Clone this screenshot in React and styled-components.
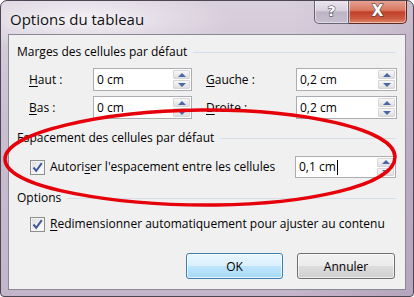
import styled, { createGlobalStyle } from "styled-components";

const GlobalStyle = createGlobalStyle`
  html, body {
    margin: 0;
    padding: 0;
    background: #ffffff;
  }
  body {
    font-family: "Open Sans", "Noto Sans", sans-serif;
    font-size: 12px;
    color: #000;
  }
`;

const Window = styled.div`
  position: relative;
  width: 414px;
  height: 297px;
  box-sizing: border-box;
  border: 1px solid #4b4652;
  border-radius: 7px 7px 4px 4px;
  padding: 0 7px 6px;
  display: flex;
  flex-direction: column;
  overflow: hidden;
  background:
    radial-gradient(ellipse 150px 34px at 80px 18px, rgba(255, 255, 255, 0.7), rgba(255, 255, 255, 0)),
    linear-gradient(90deg, rgba(255, 255, 255, 0) 70%, rgba(120, 95, 130, 0.18) 100%),
    linear-gradient(180deg, #d9d0dd 0%, #c9bdd0 45%, #c3b5ca 100%);
`;

const TitleBar = styled.div`
  height: 33px;
  display: flex;
  align-items: flex-start;
`;

const Title = styled.div`
  font-size: 15px;
  line-height: 20px;
  padding: 8px 0 0 2px;
  color: #111;
  text-shadow: 0 0 8px rgba(255, 255, 255, 0.9);
`;

const Caption = styled.div`
  margin: -1px -1px 0 auto;
  display: flex;
`;

const CaptionButton = styled.div`
  height: 24px;
  box-sizing: border-box;
  width: ${(p) => (p.close ? "58px" : "35px")};
  border: 1px solid ${(p) => (p.close ? "#5e2a22" : "#6a6574")};
  border-top: none;
  border-left: ${(p) => (p.close ? "none" : undefined)};
  border-radius: ${(p) => (p.close ? "0 0 5px 0" : "0 0 0 5px")};
  background: ${(p) =>
    p.close
      ? "linear-gradient(180deg, #e9a597 0%, #d8785f 45%, #c2402a 52%, #cc5a3e 80%, #de8a6a 100%)"
      : "linear-gradient(180deg, #ebe6ef 0%, #d9d2df 45%, #bdb4c6 52%, #c6bece 100%)"};
  box-shadow: inset 0 0 0 1px rgba(255, 255, 255, 0.45);
  display: flex;
  align-items: center;
  justify-content: center;
  font-family: "DejaVu Sans", sans-serif;
  font-weight: bold;
  font-size: ${(p) => (p.close ? "15px" : "14px")};
  color: #fff;
  -webkit-text-stroke: 1px #3a3540;
  paint-order: stroke fill;
  padding-bottom: 2px;
`;

const Client = styled.div`
  flex: 1;
  border: 1px solid #8b8893;
  background: #f0f0f0;
  padding: 9px 9px 0 8px;
  display: flex;
  flex-direction: column;
`;

const GroupHeading = styled.div`
  display: flex;
  align-items: center;
  height: 16px;
  line-height: 16px;
  margin-top: ${(p) => p.top || 0}px;
  gap: 6px;

  &::after {
    content: "";
    flex: 1;
    height: 1px;
    background: #d5dde6;
    margin-top: 1px;
  }
`;

const FieldGrid = styled.div`
  display: grid;
  grid-template-columns: 50px 99px 76px 101px;
  column-gap: 14px;
  row-gap: 5px;
  margin: 8px 0 0 12px;
  align-items: center;
`;

const Label = styled.div`
  line-height: 16px;
`;

const Key = styled.span`
  text-decoration: underline;
  text-underline-offset: 2px;
`;

const SpinBox = styled.div`
  height: ${(p) => p.h || 23}px;
  box-sizing: border-box;
  border: 1px solid #abadb3;
  background: #fff;
  display: flex;
  align-items: stretch;
`;

const Value = styled.div`
  flex: 1;
  padding-left: 3px;
  display: flex;
  align-items: center;
  line-height: 16px;
`;

const Caret = styled.span`
  display: inline-block;
  width: 1px;
  height: 15px;
  background: #000;
  margin-left: 1px;
`;

const SpinColumn = styled.div`
  width: 17px;
  display: flex;
  flex-direction: column;
  gap: 1px;
  padding: 1px 1px 1px 0;
`;

const SpinButton = styled.div`
  flex: 1;
  border: 1px solid #d6d6d6;
  border-radius: 1px;
  background: linear-gradient(180deg, #f7f7f7 0%, #ececec 50%, #dedede 100%);
  display: flex;
  align-items: center;
  justify-content: center;
`;

const Arrow = styled.div`
  width: 0;
  height: 0;
  border-left: 4px solid transparent;
  border-right: 4px solid transparent;
  ${(p) =>
    p.down ? "border-top: 4px solid #4b68a6;" : "border-bottom: 4px solid #4b68a6;"}
`;

const CheckRow = styled.div`
  display: flex;
  align-items: center;
  margin: ${(p) => p.top || 0}px 0 0 13px;
  height: ${(p) => p.h || 16}px;
`;

const CheckLabel = styled.div`
  flex: ${(p) => (p.grow ? 1 : "none")};
  margin-left: 5px;
  line-height: 16px;
`;

const SpinSlot = styled.div`
  width: 101px;
`;

const Box = styled.div`
  width: 13px;
  height: 13px;
  border: 1px solid #8e8f8f;
  background: linear-gradient(135deg, #dcdcdc 0%, #f4f4f4 60%, #ffffff 100%);
  box-shadow: inset 0 0 0 1px #f4f4f4;
  display: flex;
  align-items: center;
  justify-content: center;
`;

const Footer = styled.div`
  display: flex;
  justify-content: flex-end;
  gap: 14px;
  margin: 21px 1px 0 0;
`;

const Button = styled.div`
  width: ${(p) => p.w}px;
  height: 26px;
  box-sizing: border-box;
  border: 1px solid ${(p) => (p.primary ? "#3c7fb1" : "#707070")};
  border-radius: 3px;
  background: ${(p) =>
    p.primary
      ? "linear-gradient(180deg, #eaf6fd 0%, #d9f0fc 50%, #bee6fd 51%, #a7d9f5 100%)"
      : "linear-gradient(180deg, #f2f2f2 0%, #ebebeb 50%, #dddddd 51%, #cfcfcf 100%)"};
  box-shadow: inset 0 0 0 1px ${(p) => (p.primary ? "rgba(255,255,255,0.7)" : "rgba(255,255,255,0.6)")};
  display: flex;
  align-items: center;
  justify-content: center;
`;

const Overlay = styled.svg`
  position: absolute;
  left: 0;
  top: 0;
  pointer-events: none;
`;

const Check = () => (
  <Box>
    <svg width="11" height="11" viewBox="0 0 11 11">
      <path d="M1.5 5.5 L4.2 8.8 L9.8 1.2" fill="none" stroke="#3f5b9e" strokeWidth="2" />
    </svg>
  </Box>
);

const Spin = ({ value, h, caret }) => (
  <SpinBox h={h}>
    <Value>
      {value}
      {caret && <Caret />}
    </Value>
    <SpinColumn>
      <SpinButton>
        <Arrow />
      </SpinButton>
      <SpinButton>
        <Arrow down />
      </SpinButton>
    </SpinColumn>
  </SpinBox>
);

export default function App() {
  return (
    <>
      <GlobalStyle />
      <Window>
        <TitleBar>
          <Title>Options du tableau</Title>
          <Caption>
            <CaptionButton>?</CaptionButton>
            <CaptionButton close>X</CaptionButton>
          </Caption>
        </TitleBar>
        <Client>
          <GroupHeading>Marges des cellules par défaut</GroupHeading>
          <FieldGrid>
            <Label>
              <Key>H</Key>aut :
            </Label>
            <Spin value="0 cm" />
            <Label>
              <Key>G</Key>auche :
            </Label>
            <Spin value="0,2 cm" />
            <Label>
              <Key>B</Key>as :
            </Label>
            <Spin value="0 cm" />
            <Label>
              <Key>D</Key>roite :
            </Label>
            <Spin value="0,2 cm" />
          </FieldGrid>

          <GroupHeading top={11}>Espacement des cellules par défaut</GroupHeading>
          <CheckRow top={10} h={22}>
            <Check />
            <CheckLabel grow>
              Autori<Key>s</Key>er l'espacement entre les cellules
            </CheckLabel>
            <SpinSlot>
              <Spin value="0,1 cm" h={22} caret />
            </SpinSlot>
          </CheckRow>

          <GroupHeading top={12}>Options</GroupHeading>
          <CheckRow top={10}>
            <Check />
            <CheckLabel>
              <Key>R</Key>edimensionner automatiquement pour ajuster au contenu
            </CheckLabel>
          </CheckRow>

          <Footer>
            <Button primary w={97}>
              OK
            </Button>
            <Button w={98}>Annuler</Button>
          </Footer>
        </Client>
        <Overlay width="414" height="297" viewBox="0 0 414 297">
          <path
            d="M200 109 C 300 108, 394 128, 394 156 C 394 186, 300 203, 215 204 C 120 205, 4 188, 4 158 C 4 132, 100 110, 200 109 Z"
            fill="none"
            stroke="#e5000a"
            strokeWidth="3.5"
          />
        </Overlay>
      </Window>
    </>
  );
}
